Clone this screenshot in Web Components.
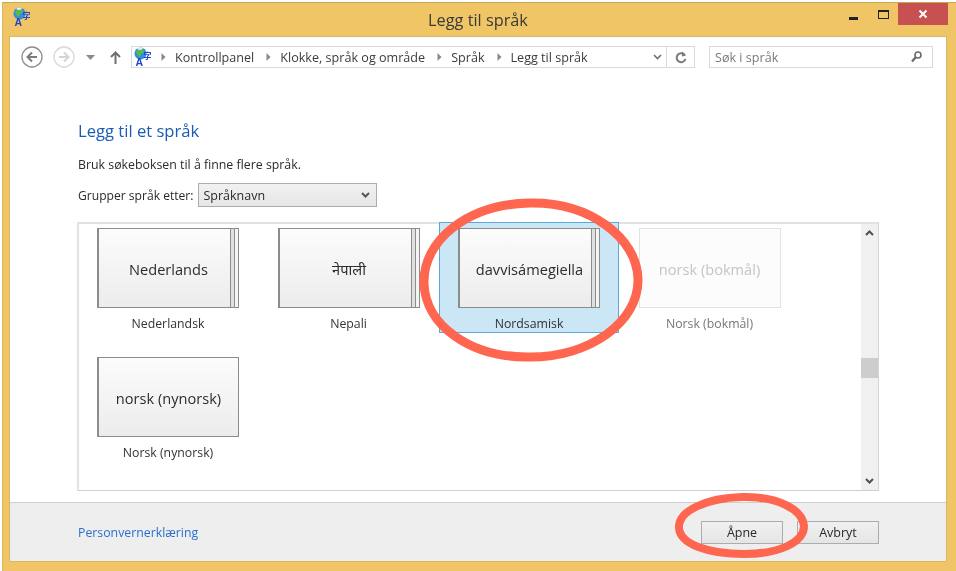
<!DOCTYPE html>
<html>
	<head>
		<meta charset="utf-8">
		<style>
			html, body {
				margin: 0;
				height: 100%;
				background: #fff;
				overflow: hidden;
				font-family: "Open Sans", "Noto Sans", sans-serif;
			}
			body {
				padding: 2px 0 0 2px;
				box-sizing: border-box;
				position: relative;
				/* the reference is a soft, scaled up capture */
				filter: blur(0.4px);
			}
		</style>
	</head>

	<body>
		<app-window title-text="Legg til språk">
			<nav-bar></nav-bar>
			<lang-panel>
				<lang-tile native="Nederlands" label="Nederlandsk" stacked></lang-tile>
				<lang-tile native="नेपाली" label="Nepali" stacked></lang-tile>
				<lang-tile native="davvisámegiella" label="Nordsamisk" stacked selected></lang-tile>
				<lang-tile native="norsk (bokmål)" label="Norsk (bokmål)" disabled></lang-tile>
				<lang-tile native="norsk (nynorsk)" label="Norsk (nynorsk)"></lang-tile>
			</lang-panel>
			<foot-bar></foot-bar>
		</app-window>
		<red-circles></red-circles>
	</body>

	<script>
		const LANG_ICON = `
			<svg width="18" height="20" viewBox="0 0 18 20">
				<circle cx="6.500" cy="6.500" r="6" fill="#2f8fd8"/>
				<path d="M2 5c2-3 5-4 7-3l1 3-3 2-1 3-2-1-1-2z" fill="#5cb848"/>
				<path d="M3 2a6 6 0 0 1 6-1l-1 1.500-3 .5z" fill="#dff2fb"/>
				<text x="1.500" y="19" font-family="Liberation Sans" font-size="10.500" font-weight="700" fill="#2346c8">A</text>
				<text x="9.500" y="12" font-family="Noto Sans CJK SC" font-size="8" font-weight="700" fill="#2346c8">字</text>
			</svg>`;

		class AppWindow extends HTMLElement {
			constructor() {
				super();
				const shadow = this.attachShadow({ mode: 'open' });
				shadow.innerHTML = `
					<style>
						:host {
							display: flex;
							flex-direction: column;
							width: 954px;
							height: 569px;
							box-sizing: border-box;
							background: #efc566;
							border-top: 1px solid #c8a555;
							border-left: 1px solid #dcb55e;
							padding: 0 9px 9px 6px;
						}
						.title {
							position: relative;
							display: flex;
							align-items: center;
							justify-content: center;
							height: 33px;
							flex: none;
							color: #3a3a3a;
							font-size: 16.300px;
						}
						.title .icon { position: absolute; left: 4px; top: 4px; }
						.ctrls {
							position: absolute;
							top: 0;
							right: -1px;
							display: flex;
							align-items: flex-start;
						}
						.min { width: 9px; height: 3px; background: #222; margin: 14px 20px 0 0; }
						.max { width: 9px; height: 6px; border: 1px solid #222; border-top-width: 2px; margin: 7px 9px 0 0; }
						.close {
							display: flex;
							align-items: center;
							justify-content: center;
							width: 50px;
							height: 22px;
							background: #c75050;
						}
						.body {
							flex: 1;
							display: flex;
							flex-direction: column;
							background: #fff;
							border: 1px solid #d9b660;
							min-height: 0;
						}
					</style>
					<div class="title">
						<span class="icon">${LANG_ICON}</span>
						<span class="text"></span>
						<div class="ctrls">
							<div class="min"></div>
							<div class="max"></div>
							<div class="close">
								<svg width="10" height="10" viewBox="0 0 10 10"><path d="M1.500 1.500l7 7M8.500 1.500l-7 7" stroke="#fff" stroke-width="2"/></svg>
							</div>
						</div>
					</div>
					<div class="body"><slot></slot></div>
				`;
				shadow.querySelector('.text').textContent = this.getAttribute('title-text');
			}
		}
		customElements.define('app-window', AppWindow);

		class NavBar extends HTMLElement {
			constructor() {
				super();
				const shadow = this.attachShadow({ mode: 'open' });
				const sep = `<svg class="sep" width="5" height="8" viewBox="0 0 5 8"><path d="M0.500 0l4 4-4 4z" fill="#8a8a8a"/></svg>`;
				shadow.innerHTML = `
					<style>
						:host {
							display: flex;
							align-items: center;
							flex: none;
							height: 22px;
							margin-top: 9px;
							padding-left: 11px;
							color: #3c3c3c;
							font-size: 12.600px;
						}
						svg { display: block; flex: none; }
						.addr {
							display: flex;
							align-items: center;
							width: 564px;
							height: 22px;
							box-sizing: border-box;
							border: 1px solid #d9d9d9;
							margin-left: 10px;
						}
						.addr .globe { margin: 0 9px 0 2px; }
						.crumb { margin: 0 12px 0 9px; white-space: nowrap; }
						.drop { margin-left: auto; margin-right: 4px; }
						.refresh {
							display: flex;
							align-items: center;
							justify-content: center;
							width: 27px;
							height: 20px;
							border-left: 1px solid #d9d9d9;
						}
						.search {
							display: flex;
							align-items: center;
							justify-content: space-between;
							width: 224px;
							height: 22px;
							box-sizing: border-box;
							border: 1px solid #d9d9d9;
							margin-left: 14px;
							padding: 0 10px 0 5px;
							color: #7a7a7a;
						}
					</style>
					<svg width="22" height="22" viewBox="0 0 22 22">
						<circle cx="11" cy="11" r="10" fill="none" stroke="#8c8c8c" stroke-width="1.300"/>
						<path d="M16 11H7M11 6.500L6.500 11l4.500 4.500" fill="none" stroke="#7c7c7c" stroke-width="2"/>
					</svg>
					<svg style="margin-left:10px" width="22" height="22" viewBox="0 0 22 22">
						<circle cx="11" cy="11" r="10" fill="none" stroke="#d8d8d8" stroke-width="1.300"/>
						<path d="M6 11h9M11 6.500l4.500 4.500-4.500 4.500" fill="none" stroke="#d4d4d4" stroke-width="2"/>
					</svg>
					<svg style="margin-left:11px" width="9" height="5" viewBox="0 0 9 5"><path d="M0 0h9L4.500 5z" fill="#8a8a8a"/></svg>
					<svg style="margin-left:15px" width="11" height="13" viewBox="0 0 11 13"><path d="M5.500 13V1.500M1 6l4.500-4.500L10 6" fill="none" stroke="#707070" stroke-width="2"/></svg>
					<div class="addr">
						<span class="globe">${LANG_ICON}</span>
						${sep}<span class="crumb">Kontrollpanel</span>
						${sep}<span class="crumb">Klokke, språk og område</span>
						${sep}<span class="crumb">Språk</span>
						${sep}<span class="crumb">Legg til språk</span>
						<svg class="drop" width="9" height="6" viewBox="0 0 9 6"><path d="M1 1l3.500 3.500L8 1" fill="none" stroke="#707070" stroke-width="1.600"/></svg>
						<div class="refresh">
							<svg width="12" height="13" viewBox="0 0 12 13"><path d="M9.800 4A4.500 4.500 0 1 0 10.500 8" fill="none" stroke="#7a7a7a" stroke-width="2"/><path d="M7 0.500v5l4-1z" fill="#7a7a7a"/></svg>
						</div>
					</div>
					<div class="search">
						<span>Søk i språk</span>
						<svg width="11" height="12" viewBox="0 0 11 12"><circle cx="7" cy="4" r="3" fill="none" stroke="#6a6a6a" stroke-width="1.600"/><path d="M4.500 6.500L1 10.500" stroke="#6a6a6a" stroke-width="2.200"/></svg>
					</div>
				`;
			}
		}
		customElements.define('nav-bar', NavBar);

		class LangPanel extends HTMLElement {
			constructor() {
				super();
				const shadow = this.attachShadow({ mode: 'open' });
				shadow.innerHTML = `
					<style>
						:host {
							display: flex;
							flex-direction: column;
							flex: 1;
							min-height: 0;
							padding: 52px 67px 11px 67px;
							color: #2a2a2a;
							font-size: 12.350px;
						}
						h1 {
							margin: 0 0 0 1px;
							font-size: 16.600px;
							line-height: 22px;
							font-weight: 400;
							color: #1a5bb5;
						}
						p { margin: 14px 0 0 1px; line-height: 18px; }
						.group { display: flex; align-items: center; margin: 9px 0 0 1px; height: 24px; font-size: 12.100px; }
						.select {
							display: flex;
							align-items: center;
							justify-content: space-between;
							width: 179px;
							height: 24px;
							box-sizing: border-box;
							margin-left: 5px;
							padding: 0 6px 0 4px;
							border: 1px solid #acacac;
							background: linear-gradient(#f1f1f1, #e6e6e6);
							font-size: 12.500px;
						}
						.list {
							display: flex;
							flex: 1;
							min-height: 0;
							margin-top: 15px;
							box-sizing: border-box;
							border: 1px solid #d0d0d0;
							border-width: 2px 1px 1px 2px;
							border-color: #e2e2e2 #d4d4d4 #cfcfcf #e2e2e2;
						}
						.tiles {
							flex: 1;
							display: grid;
							grid-template-columns: repeat(4, 180.500px);
							grid-auto-rows: 111px;
							row-gap: 18px;
							margin: -2px 0 0 -1px;
						}
						.bar {
							display: flex;
							flex-direction: column;
							justify-content: space-between;
							align-items: center;
							width: 17px;
							background: #f0f0f0;
							position: relative;
							padding: 6px 0 6px;
							box-sizing: border-box;
						}
						.thumb { position: absolute; left: 0; right: 0; top: 134px; height: 20px; background: #cdcdcd; }
					</style>
					<h1>Legg til et språk</h1>
					<p>Bruk søkeboksen til å finne flere språk.</p>
					<div class="group">
						<span>Grupper språk etter:</span>
						<div class="select">
							<span>Språknavn</span>
							<svg width="9" height="6" viewBox="0 0 9 6"><path d="M1 1l3.500 3.500L8 1" fill="none" stroke="#555" stroke-width="2"/></svg>
						</div>
					</div>
					<div class="list">
						<div class="tiles"><slot></slot></div>
						<div class="bar">
							<svg width="9" height="6" viewBox="0 0 9 6"><path d="M1 5l3.500-3.500L8 5" fill="none" stroke="#505050" stroke-width="2"/></svg>
							<div class="thumb"></div>
							<svg width="9" height="6" viewBox="0 0 9 6"><path d="M1 1l3.500 3.500L8 1" fill="none" stroke="#505050" stroke-width="2"/></svg>
						</div>
					</div>
				`;
			}
		}
		customElements.define('lang-panel', LangPanel);

		class LangTile extends HTMLElement {
			constructor() {
				super();
				const shadow = this.attachShadow({ mode: 'open' });
				shadow.innerHTML = `
					<style>
						:host {
							display: flex;
							flex-direction: column;
							box-sizing: border-box;
							padding: 5px 0 0 18px;
							color: #333;
							font-size: 12.300px;
							border: 1px solid transparent;
						}
						:host([selected]) {
							background: #cbe6f5;
							border-color: #5ba8d9;
							margin-right: 1px;
						}
						.tile {
							position: relative;
							display: flex;
							align-items: center;
							justify-content: center;
							width: 142px;
							height: 80px;
							box-sizing: border-box;
							border: 1px solid #8c8c8c;
							border-left-width: 2px;
							padding-top: 1px;
							background: linear-gradient(#fcfcfc, #ececec);
							font-size: 14.600px;
							color: #2c2c2c;
						}
						:host([stacked]) .tile::after {
							content: "";
							position: absolute;
							top: 0;
							bottom: 0;
							right: 0;
							width: 7px;
							border-left: 1px solid #8c8c8c;
							background: linear-gradient(90deg, #e0e0e0 0 3px, #8c8c8c 3px 4px, #f4f4f4 4px);
						}
						:host([disabled]) .tile {
							border: 1px solid #e2e2e2;
							background: #fcfcfc;
							color: #c4c4c4;
						}
						.label { width: 142px; margin-top: 9px; line-height: 14px; text-align: center; }
						:host([disabled]) .label { color: #777; }
					</style>
					<div class="tile"></div>
					<div class="label"></div>
				`;
				shadow.querySelector('.tile').textContent = this.getAttribute('native');
				shadow.querySelector('.label').textContent = this.getAttribute('label');
			}
		}
		customElements.define('lang-tile', LangTile);

		class WinButton extends HTMLElement {
			constructor() {
				super();
				const shadow = this.attachShadow({ mode: 'open' });
				shadow.innerHTML = `
					<style>
						:host {
							display: flex;
							align-items: center;
							justify-content: center;
							width: 82px;
							height: 23px;
							box-sizing: border-box;
							border: 1px solid #acacac;
							background: linear-gradient(#f0f0f0, #e5e5e5);
							color: #2a2a2a;
							font-size: 12.500px;
						}
					</style>
					<slot></slot>
				`;
			}
		}
		customElements.define('win-button', WinButton);

		class FootBar extends HTMLElement {
			constructor() {
				super();
				const shadow = this.attachShadow({ mode: 'open' });
				shadow.innerHTML = `
					<style>
						:host {
							display: flex;
							align-items: center;
							flex: none;
							height: 59px;
							box-sizing: border-box;
							background: #eeeeee;
							border-top: 1px solid #cfcfcf;
							padding: 0 67px 0 68px;
							font-size: 12.300px;
							color: #2a6fd0;
						}
						.link { margin-right: auto; }
						win-button + win-button { margin-left: 14px; }
					</style>
					<span class="link">Personvernerklæring</span>
					<win-button>Åpne</win-button>
					<win-button>Avbryt</win-button>
				`;
			}
		}
		customElements.define('foot-bar', FootBar);

		// hand drawn marks lying over the window
		class RedCircles extends HTMLElement {
			constructor() {
				super();
				const shadow = this.attachShadow({ mode: 'open' });
				shadow.innerHTML = `
					<style>
						:host { position: absolute; left: 0; top: 0; pointer-events: none; }
						svg { display: block; }
					</style>
					<svg width="956" height="571" viewBox="0 0 956 571">
						<path d="M530 203C590 202 637 238 638 279C639 322 590 357 530 357C470 358 425 325 424 283C423 240 468 204 530 203Z" fill="none" stroke="#ff6650" stroke-width="9"/>
						<path d="M742 497C778 496 803 510 804 526C804 542 780 554 744 554C708 554 680 544 679 528C678 511 706 498 742 497Z" fill="none" stroke="#ff6650" stroke-width="8"/>
					</svg>
				`;
			}
		}
		customElements.define('red-circles', RedCircles);
	</script>
</html>
